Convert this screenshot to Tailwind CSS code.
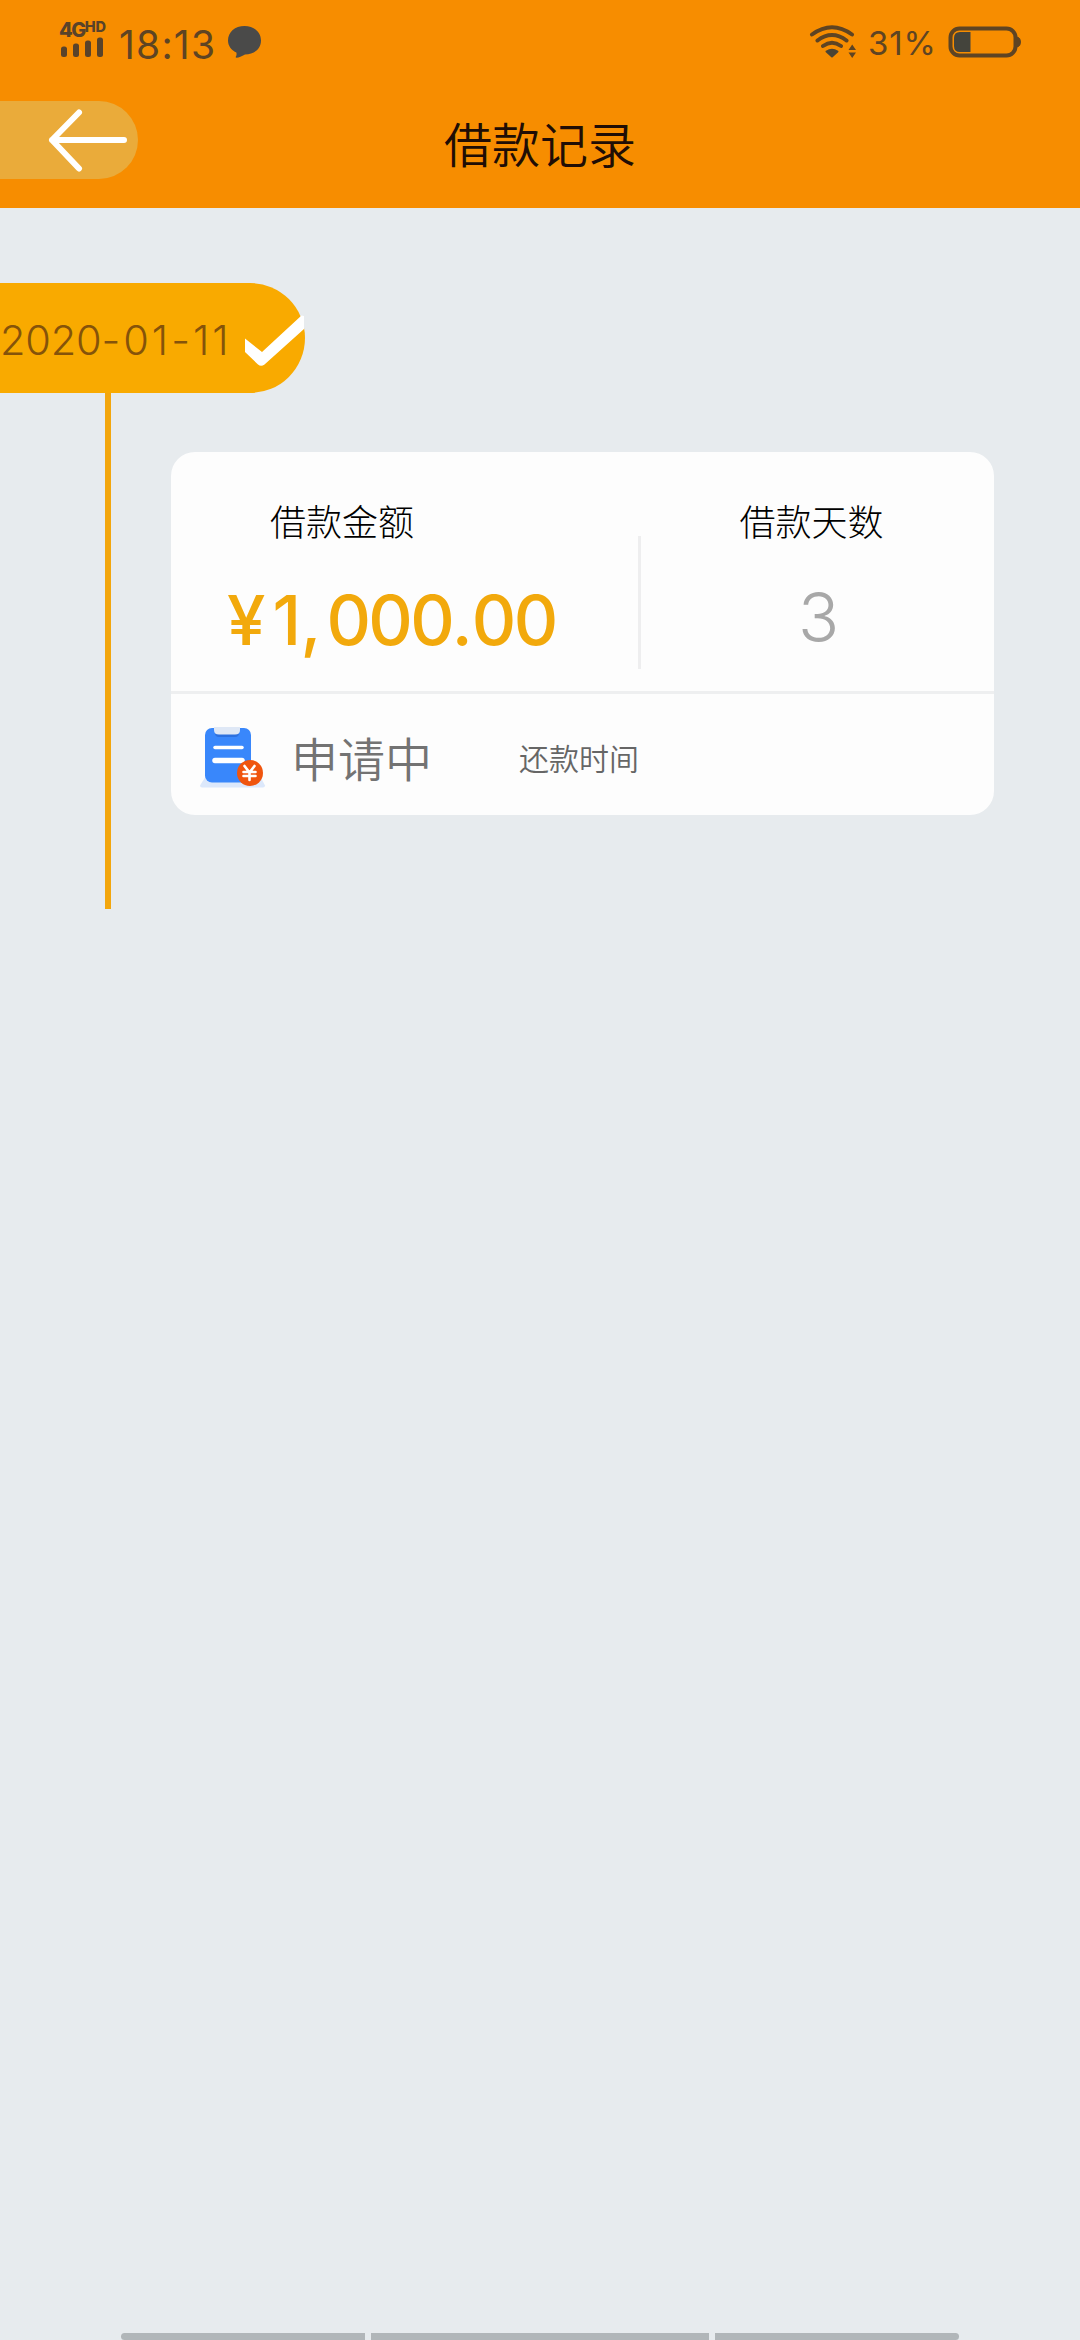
<!DOCTYPE html>
<html lang="zh-CN">
<head>
<meta charset="utf-8">
<title>借款记录</title>
<script src="https://cdn.jsdelivr.net/npm/@tailwindcss/browser@4"></script>
</head>
<body class="flex h-[2340px] w-[1080px] flex-col overflow-hidden bg-[#e7ebee] font-['Inter','Noto_Sans_CJK_SC',sans-serif] leading-none">
  <header class="h-[208px] shrink-0 bg-[#f78d00]">
    <!-- status bar -->
    <div class="flex h-[101px] items-start justify-between pl-[59px] pr-[59px] text-[#5e4423]">
      <div class="flex items-start">
        <div class="flex w-[48px] flex-col pt-[20px] text-[#59432a]">
          <div class="flex h-[17px] items-start font-extrabold"><span class="text-[20px] leading-[20px] tracking-[-1.5px]">4G</span><span class="text-[14.5px] leading-[13px] tracking-[-0.2px]">HD</span></div>
          <svg class="ml-[1px]" width="46" height="22" viewBox="0 0 46 22" fill="currentColor"><rect x="1" y="9.500" width="6" height="10.500" rx="2.500"/><rect x="13" y="6.500" width="6" height="13.500" rx="2.500"/><rect x="25" y="3.500" width="6" height="16.500" rx="2.500"/><rect x="37" y=".5" width="6" height="19.500" rx="2.500"/></svg>
        </div>
        <span class="ml-[12px] mt-[25px] w-[96px] text-[39px] tracking-[1.2px]">18:13</span>
        <svg class="ml-[12px] mt-[25px]" width="36" height="34" viewBox="0 0 36 34" fill="#4a4a49"><path d="M17.500 1C27 1 34 7 34 15.500S27 29.500 18 29.500c-3.500 2-6 3-8.500 3.200-.8 0-1-.6-.6-1.200.7-1 .9-2.500.4-4C4 25 1 20.500 1 15.500 1 7 8 1 17.500 1Z"/></svg>
      </div>
      <div class="flex items-start">
        <svg class="mt-[23px]" width="48" height="37" viewBox="0 0 48 37" fill="none" stroke="currentColor" stroke-width="4" stroke-linecap="round"><path d="M4 11.500Q24 -3 44 11.500M9.500 17.500Q24 6.500 38.500 17.500M15 23Q24 16.500 33 23"/><path d="M18.500 28.500Q24 25 29.500 28.500L24 33.500Z" fill="#4a4435" stroke="#4a4435" stroke-width="2" stroke-linejoin="round"/><path d="M40.500 27l3.700-5.500L48 27ZM40.500 29.500l3.700 5.500L48 29.500Z" fill="currentColor" stroke="none"/></svg>
        <span class="ml-[12px] mt-[27px] w-[68px] text-[33px] tracking-[0.9px]">31%</span>
        <svg class="ml-[12px] mt-[26px]" width="73" height="32" viewBox="0 0 73 32"><rect x="2.500" y="2.500" width="65" height="27" rx="9" fill="none" stroke="currentColor" stroke-width="4"/><path d="M22.500 6v20H12q-6 0-6-6v-8q0-6 6-6Z" fill="#44443c"/><path d="M69.500 11q3 1 3 5t-3 5Z" fill="currentColor" stroke="currentColor"/></svg>
      </div>
    </div>
    <!-- title bar -->
    <div class="grid grid-cols-[138px_1fr_138px]">
      <div class="flex h-[78px] items-center rounded-r-full bg-[#eaab3a] pl-[48px]">
        <svg width="80" height="64" viewBox="0 0 80 64" fill="none" stroke="#fff" stroke-width="6" stroke-linecap="round" stroke-linejoin="round"><path d="M31 4.500L4 32L31 60.500M4 32H76"/></svg>
      </div>
      <h1 class="pt-[21px] text-center text-[48px] font-[350] text-[#200d05]">借款记录</h1>
    </div>
  </header>

  <main class="grow pt-[75px]">
    <div class="flex h-[110px] w-[305px] rounded-r-full bg-[#f9aa00]">
      <span class="w-[245px] shrink-0 whitespace-nowrap pt-[37px] text-[41.500px] font-light tracking-[3px] text-[#85530a]"><span class="tracking-[-0.2px]">2020</span>-01-11</span>
      <svg class="mt-[24px] shrink-0" width="59" height="62" viewBox="0 0 59 62" fill="#fff"><path d="M0 31.500V45L13 57.500q3 2.500 6.500 0L59 22V9L56.500 8.500L17 45Z"/></svg>
    </div>
    <div class="flex">
      <div class="ml-[105px] h-[516px] w-[6px] bg-[#f3a60d]"></div>
      <section class="ml-[60px] mt-[59px] h-[363px] w-[823px] rounded-[24px] bg-[#fdfdfd]">
        <div class="flex h-[242px] border-b-3 border-[#eeeff0]">
          <div class="flex w-[467px] flex-col">
            <h2 class="ml-[99px] mt-[53px] text-[36px] font-light text-black">借款金额</h2>
            <p class="ml-[56px] mt-[45px] text-[69px] font-[450] tracking-[-2.700px] text-[#f2a90c]"><span class="tracking-[7px]">¥</span><span class="tracking-[-0.5px]">1</span><span class="tracking-[5px]">,</span>00<span class="tracking-[-1px]">0.</span>00</p>
          </div>
          <div class="mt-[84px] h-[133px] w-[3px] bg-[#eeeeef]"></div>
          <div class="flex grow flex-col items-center pr-[12px]">
            <h2 class="mt-[53px] text-[36px] font-light text-black">借款天数</h2>
            <p class="mt-[42px] pl-[14px] text-[68px] font-light text-[#a8a8a8]">3</p>
          </div>
        </div>
        <div class="flex items-start">
          <svg class="ml-[29px] mt-[30px]" width="66" height="66" viewBox="0 0 66 66"><path d="M6 52h54l5 9.500q0 2-2 2H2q-2 0-2-2Z" fill="#dce8fb"/><rect x="5" y="4" width="46" height="54.500" rx="7" fill="#3987fb"/><path d="M15 8h24v1q0 4-4 4H19q-4 0-4-4Z" fill="#2c70df"/><path d="M14 3h26v3q0 4.500-5 4.500H19q-5 0-5-4.500Z" fill="#dfe8f6"/><path d="M15 23.500h27" stroke="#fff" stroke-linecap="round" stroke-width="3.500"/><path d="M15 36.500h27" stroke="#fff" stroke-linecap="round" stroke-width="5.500"/><circle cx="50" cy="49" r="13" fill="#f0550e"/><path d="M44.500 42l5 6.500L54.500 42M49.500 48v8M43.500 48h12M43.500 52h12" fill="none" stroke="#fff" stroke-width="2.600" stroke-linecap="round"/></svg>
          <span class="ml-[25px] mt-[42px] text-[47px] font-[350] text-[#737373]">申请中</span>
          <span class="ml-[87px] mt-[50px] text-[30px] font-[350] text-[#666]">还款时间</span>
        </div>
      </section>
    </div>
  </main>

  <!-- gesture navigation hints -->
  <footer class="flex h-[7px] shrink-0 gap-[6px] pl-[121px]">
    <div class="w-[244px] rounded-l-full bg-[#b1b6b9]"></div>
    <div class="w-[338px] bg-[#b1b6b9]"></div>
    <div class="w-[244px] rounded-r-full bg-[#b1b6b9]"></div>
  </footer>
</body>
</html>
